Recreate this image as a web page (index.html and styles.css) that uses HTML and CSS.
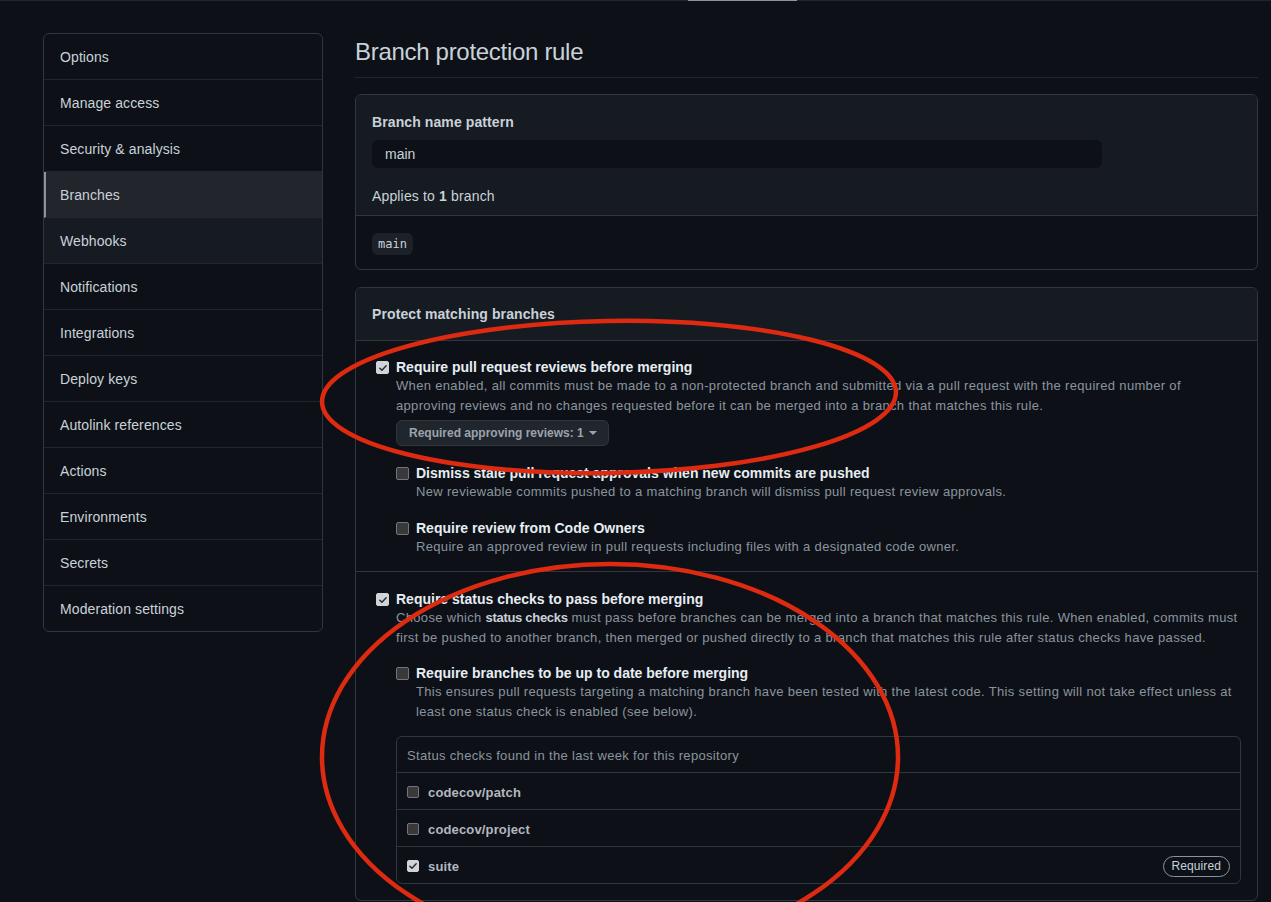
FILE: index.html
```html
<!DOCTYPE html>
<html lang="en">
<head>
<meta charset="utf-8">
<title>Branch protection rule</title>
<link rel="stylesheet" href="styles.css">
</head>
<body>
<div class="topbar"><span class="topbar-active"></span></div>
<div class="layout">
  <nav class="sidebar">
    <a class="side-item">Options</a>
    <a class="side-item">Manage access</a>
    <a class="side-item">Security &amp; analysis</a>
    <a class="side-item selected">Branches</a>
    <a class="side-item hovered">Webhooks</a>
    <a class="side-item">Notifications</a>
    <a class="side-item">Integrations</a>
    <a class="side-item">Deploy keys</a>
    <a class="side-item">Autolink references</a>
    <a class="side-item">Actions</a>
    <a class="side-item">Environments</a>
    <a class="side-item">Secrets</a>
    <a class="side-item">Moderation settings</a>
  </nav>
  <main class="main">
    <h1 class="page-title">Branch protection rule</h1>

    <section class="box">
      <div class="box-header pattern-header">
        <label class="field-label">Branch name pattern</label>
        <div class="text-input">main</div>
        <div class="applies">Applies to <strong>1</strong> branch</div>
      </div>
      <div class="box-body">
        <code class="branch-code">main</code>
      </div>
    </section>

    <section class="box box-protect">
      <div class="box-header protect-header">Protect matching branches</div>

      <div class="protect-section first">
        <div class="option">
          <span class="cb checked"><svg viewBox="0 0 12 12" width="10" height="10"><path d="M2.2 6.3 4.7 8.8 9.8 3.2" fill="none" stroke="#24292f" stroke-width="1.7" stroke-linecap="round" stroke-linejoin="round"/></svg></span>
          <div class="option-body">
            <div class="option-label">Require pull request reviews before merging</div>
            <p class="note">When enabled, all commits must be made to a non-protected branch and submitted via a pull request with the required number of approving reviews and no changes requested before it can be merged into a branch that matches this rule.</p>
            <button class="select-btn">Required approving reviews: 1 <span class="caret"></span></button>

            <div class="option nested first-nested">
              <span class="cb"></span>
              <div class="option-body">
                <div class="option-label">Dismiss stale pull request approvals when new commits are pushed</div>
                <p class="note">New reviewable commits pushed to a matching branch will dismiss pull request review approvals.</p>
              </div>
            </div>
            <div class="option nested">
              <span class="cb"></span>
              <div class="option-body">
                <div class="option-label">Require review from Code Owners</div>
                <p class="note">Require an approved review in pull requests including files with a designated code owner.</p>
              </div>
            </div>
          </div>
        </div>
      </div>

      <div class="protect-section second">
        <div class="option">
          <span class="cb checked"><svg viewBox="0 0 12 12" width="10" height="10"><path d="M2.2 6.3 4.7 8.8 9.8 3.2" fill="none" stroke="#24292f" stroke-width="1.7" stroke-linecap="round" stroke-linejoin="round"/></svg></span>
          <div class="option-body">
            <div class="option-label">Require status checks to pass before merging</div>
            <p class="note">Choose which <strong>status checks</strong> must pass before branches can be merged into a branch that matches this rule. When enabled, commits must first be pushed to another branch, then merged or pushed directly to a branch that matches this rule after status checks have passed.</p>

            <div class="option nested uptodate">
              <span class="cb"></span>
              <div class="option-body">
                <div class="option-label">Require branches to be up to date before merging</div>
                <p class="note">This ensures pull requests targeting a matching branch have been tested with the latest code. This setting will not take effect unless at least one status check is enabled (see below).</p>
              </div>
            </div>

            <div class="checks">
              <div class="checks-header">Status checks found in the last week for this repository</div>
              <div class="check-row"><span class="cb small"></span><span class="check-name">codecov/patch</span></div>
              <div class="check-row"><span class="cb small"></span><span class="check-name">codecov/project</span></div>
              <div class="check-row"><span class="cb small checked"><svg viewBox="0 0 12 12" width="10" height="10"><path d="M2.2 6.3 4.7 8.8 9.8 3.2" fill="none" stroke="#24292f" stroke-width="1.7" stroke-linecap="round" stroke-linejoin="round"/></svg></span><span class="check-name">suite</span><span class="badge">Required</span></div>
            </div>
          </div>
        </div>
      </div>
    </section>
  </main>
</div>

<svg class="annotations" width="1271" height="902" viewBox="0 0 1271 902">
  <ellipse cx="609" cy="397" rx="287" ry="76" fill="none" stroke="#dd2a10" stroke-width="4.5" transform="rotate(-1 609 397)"/>
  <ellipse cx="610" cy="757" rx="288" ry="193" fill="none" stroke="#dd2a10" stroke-width="4.5"/>
</svg>
</body>
</html>
```
FILE: styles.css
```css
* { box-sizing: border-box; }

html, body {
  margin: 0;
  padding: 0;
  background: #0d1117;
  color: #c9d1d9;
  font-family: "Liberation Sans", Arial, sans-serif;
  font-size: 14px;
  overflow: hidden;
}

body { position: relative; width: 1271px; height: 902px; }

.topbar {
  height: 1px;
  background: #21262d;
  display: flex;
  padding-left: 688px;
}
.topbar-active {
  width: 109px;
  height: 1px;
  background: #8b949e;
}

.layout {
  display: flex;
  gap: 32px;
  padding: 32px 13px 0 43px;
  align-items: flex-start;
}

/* Sidebar */
.sidebar {
  width: 280px;
  flex: none;
  border: 1px solid #30363d;
  border-radius: 6px;
  display: flex;
  flex-direction: column;
  overflow: hidden;
}
.side-item {
  display: flex;
  align-items: center;
  height: 46px;
  padding: 1px 16px 0;
  border-bottom: 1px solid #21262d;
  color: #c9d1d9;
  font-size: 14px;
  letter-spacing: 0.1px;
  text-decoration: none;
}
.side-item:last-child { border-bottom: 0; height: 45px; }
.side-item.selected {
  background: #22262c;
  border-left: 2px solid #8b949e;
  padding-left: 14px;
}
.side-item.hovered { background: #161b22; }

/* Main */
.main { flex: 1; min-width: 0; }

.page-title {
  margin: 0;
  padding: 4px 0 10px;
  font-size: 24px;
  line-height: 30px;
  font-weight: 400;
  letter-spacing: -0.3px;
  color: #c9d1d9;
  border-bottom: 1px solid #21262d;
}

.box {
  margin-top: 16px;
  border: 1px solid #30363d;
  border-radius: 6px;
  overflow: hidden;
}
.box-protect { margin-top: 17px; }

.box-header {
  background: #161b22;
  border-bottom: 1px solid #30363d;
}

.pattern-header { padding: 17px 16px 8px; }
.field-label {
  display: block;
  font-weight: 700;
  font-size: 14px;
  line-height: 21px;
  letter-spacing: 0.1px;
  color: #c9d1d9;
}
.text-input {
  margin-top: 7px;
  width: 730px;
  height: 28px;
  padding: 0 13px;
  display: flex;
  align-items: center;
  background: #0d1117;
  border-radius: 6px;
  font-size: 14px;
  color: #c9d1d9;
}
.applies {
  margin-top: 18px;
  line-height: 21px;
  font-size: 14px;
  letter-spacing: 0.15px;
}
.applies strong { font-weight: 700; }

.box-body { padding: 17px 16px 14px; }
.branch-code {
  display: inline-block;
  height: 22px;
  line-height: 22px;
  padding: 0 6px;
  border-radius: 6px;
  background: #1c2128;
  font-family: "DejaVu Sans Mono", "Liberation Mono", monospace;
  font-size: 12px;
  color: #c9d1d9;
}

.protect-header {
  padding: 16px;
  font-weight: 700;
  font-size: 14px;
  line-height: 20px;
  letter-spacing: 0.1px;
}

.protect-section {
  padding: 17px 16px 14px 20px;
}
.protect-section.first { border-bottom: 1px solid #30363d; }
.protect-section.second { padding-top: 18px; padding-bottom: 16px; }

.option {
  display: grid;
  grid-template-columns: 20px 1fr;
  align-items: start;
}
.option-body { min-width: 0; }
.option-label {
  font-weight: 700;
  font-size: 14px;
  line-height: 18px;
  color: #e6edf3;
}
.note {
  margin: 0;
  font-size: 13px;
  line-height: 20px;
  letter-spacing: 0.33px;
  color: #8b949e;
}
.note strong { color: #c9d1d9; font-weight: 700; letter-spacing: -0.3px; }

.cb {
  width: 13px;
  height: 13px;
  margin-top: 3px;
  border: 1px solid #6e7681;
  border-radius: 2px;
  background: #3a3838;
  display: flex;
  align-items: center;
  justify-content: center;
}
.cb.checked {
  background: #d0d3d8;
  border-color: #d0d3d8;
}
.cb.small { width: 12px; height: 12px; margin-top: 0; }

.select-btn {
  margin-top: 4px;
  height: 26px;
  padding: 0 11px 0 12px;
  display: inline-flex;
  align-items: center;
  gap: 5px;
  background: #21262d;
  border: 1px solid #30363d;
  border-radius: 6px;
  color: #9ba3ad;
  font-family: inherit;
  font-weight: 700;
  font-size: 12px;
}
.caret {
  width: 0;
  height: 0;
  border-left: 4px solid transparent;
  border-right: 4px solid transparent;
  border-top: 4px solid #9ba3ad;
}

.nested { margin-top: 17px; }
.nested.first-nested { margin-top: 18px; }
.nested.uptodate { margin-top: 16px; }

.checks {
  margin-top: 14px;
  border: 1px solid #30363d;
  border-radius: 6px;
}
.checks-header {
  height: 36px;
  padding: 1px 10px 0;
  display: flex;
  align-items: center;
  border-bottom: 1px solid #30363d;
  font-size: 13px;
  letter-spacing: 0.33px;
  color: #8b949e;
}
.check-row {
  height: 37px;
  padding: 2px 10px 0;
  display: flex;
  align-items: center;
  gap: 9px;
  border-bottom: 1px solid #30363d;
}
.check-row:last-child { border-bottom: 0; height: 36px; }
.check-name {
  font-weight: 700;
  font-size: 13px;
  letter-spacing: 0.15px;
  color: #b1b8c0;
}
.badge {
  margin-left: auto;
  height: 21px;
  padding: 0 8px;
  display: flex;
  align-items: center;
  border: 1px solid #8b949e;
  border-radius: 2em;
  font-size: 12px;
  font-weight: 500;
  letter-spacing: 0.1px;
  color: #c9d1d9;
}

.annotations {
  position: absolute;
  top: 0;
  left: 0;
  pointer-events: none;
}
```
